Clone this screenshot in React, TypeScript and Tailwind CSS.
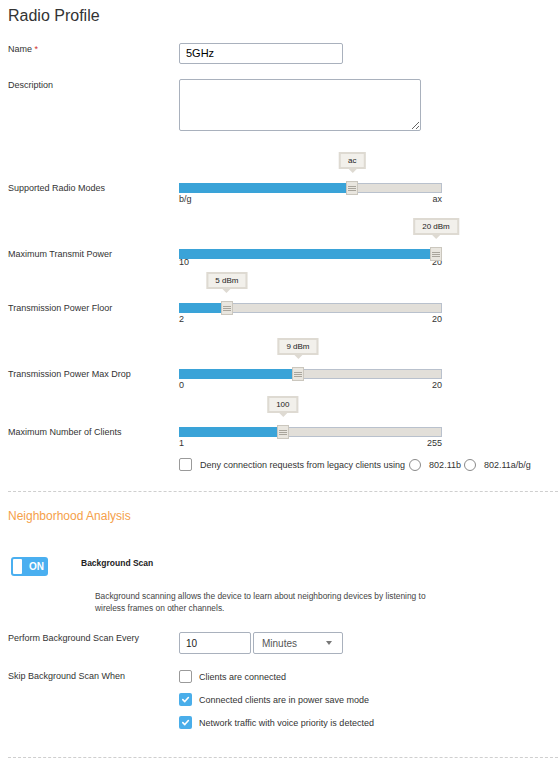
import React from "react";

const FONT = "font-['Liberation_Sans',Arial,sans-serif]";

function Slider({
  label,
  min,
  max,
  pct,
  tip,
  mt,
  labelsMt = "mt-[1px]",
}: {
  label: string;
  min: string;
  max: string;
  pct: number;
  tip: string;
  mt: string;
  labelsMt?: string;
}) {
  const left = pct * (263 - 12);
  return (
    <div className={`flex pl-[8px] ${mt}`}>
      <div className="w-[171px] h-[10px] flex items-center text-[9px] leading-[12px] whitespace-nowrap text-[#333]">
        {label}
      </div>
      <div className="w-[263px]">
        <div className="relative h-[10px] bg-[#e2dfd9] border border-[#b9c1cd]">
          <div
            className="absolute left-[-1px] top-[-1px] bottom-[-1px] bg-[#3aa3d8]"
            style={{ width: left + 6 }}
          />
          <div
            className="absolute top-[-3px] w-[12px] h-[14px] bg-[#e9e6df] border border-[#cbc7be] flex flex-col items-center justify-center gap-[1px]"
            style={{ left: left - 1 }}
          >
            <div className="w-[8px] h-[1px] bg-[#a9a59c]" />
            <div className="w-[8px] h-[1px] bg-[#a9a59c]" />
            <div className="w-[8px] h-[1px] bg-[#a9a59c]" />
          </div>
          <div
            className="absolute bottom-[19px] -translate-x-1/2 flex flex-col items-center"
            style={{ left: left + 5 }}
          >
            <div className="h-[17px] px-[7px] flex items-center bg-[#f2f0eb] border-2 border-[#dedad2] text-[8px] leading-[9px] whitespace-nowrap text-[#222]">
              {tip}
            </div>
            <div className="w-0 h-0 border-l-[4px] border-r-[4px] border-t-[4px] border-l-transparent border-r-transparent border-t-[#dedad2]" />
          </div>
        </div>
        <div className={`flex justify-between text-[9px] leading-[10px] text-[#333] ${labelsMt}`}>
          <span>{min}</span>
          <span>{max}</span>
        </div>
      </div>
    </div>
  );
}

function Checkbox({ checked }: { checked?: boolean }) {
  if (checked) {
    return (
      <div className="w-[13px] h-[13px] rounded-[2px] bg-[#4aaeea] flex items-center justify-center shrink-0">
        <svg width="9" height="9" viewBox="0 0 10 10">
          <path d="M2 5.2 L4.2 7.3 L8.2 2.8" stroke="white" strokeWidth="1.8" fill="none" strokeLinecap="round" strokeLinejoin="round" />
        </svg>
      </div>
    );
  }
  return <div className="w-[13px] h-[13px] rounded-[2px] border border-[#9a9a9a] bg-white shrink-0" />;
}

function Radio() {
  return <div className="w-[12px] h-[12px] rounded-full border border-[#8a8a8a] bg-white shrink-0" />;
}

export default function App() {
  return (
    <div className={`w-[558px] h-[775px] bg-white ${FONT} text-[#333]`}>
      <h1 className="pl-[8px] pt-[6px] text-[16px] leading-[20px] text-[#333]">Radio Profile</h1>

      <div className="flex pl-[8px] mt-[17px]">
        <div className="w-[171px] text-[9px] leading-[12px]">
          Name <span className="text-[#d0312d]">*</span>
        </div>
        <div className="w-[164px] h-[21px] border border-[#a9b1bd] rounded-[2px] flex items-center pl-[6px] text-[11px] text-black">
          5GHz
        </div>
      </div>

      <div className="flex pl-[8px] mt-[15px]">
        <div className="w-[171px] text-[9px] leading-[12px]">Description</div>
        <textarea
          className="w-[242px] h-[52px] border border-[#a9b1bd] rounded-[2px] resize-y"
          readOnly
        />
      </div>

      <Slider label="Supported Radio Modes" min="b/g" max="ax" pct={2 / 3} tip="ac" mt="mt-[52px]" />
      <Slider label="Maximum Transmit Power" min="10" max="20" pct={1} tip="20 dBm" mt="mt-[45px]" labelsMt="mt-[-2px]" />
      <Slider label="Transmission Power Floor" min="2" max="20" pct={3 / 18} tip="5 dBm" mt="mt-[36px]" />
      <Slider label="Transmission Power Max Drop" min="0" max="20" pct={9 / 20} tip="9 dBm" mt="mt-[45px]" />
      <Slider label="Maximum Number of Clients" min="1" max="255" pct={99 / 254} tip="100" mt="mt-[37px]" />

      <div className="flex items-center pl-[179px] mt-[10px] h-[13px] text-[9px] leading-[12px] whitespace-nowrap">
        <Checkbox />
        <span className="ml-[8px]">Deny connection requests from legacy clients using</span>
        <div className="ml-[4px]">
          <Radio />
        </div>
        <span className="ml-[8px]">802.11b</span>
        <div className="ml-[3px]">
          <Radio />
        </div>
        <span className="ml-[8px]">802.11a/b/g</span>
      </div>

      <div className="ml-[8px] mt-[20px] border-t border-dashed border-[#cfcfcf]" />

      <h2 className="pl-[8px] mt-[17px] text-[12px] leading-[14px] text-[#f5a04a]">Neighborhood Analysis</h2>

      <div className="flex items-start mt-[34px]">
        <div className="ml-[11px] w-[37px] h-[19px] rounded-[3px] bg-[#4aaff0] flex items-center pl-[2px]">
          <div className="w-[9px] h-[15px] bg-white rounded-[1px]" />
          <span className="ml-[7px] text-white font-bold text-[10px] leading-[12px]">ON</span>
        </div>
        <div className="ml-[33px] text-[8.5px] leading-[12px] font-bold text-[#222]">Background Scan</div>
      </div>

      <p className="pl-[95px] mt-[14px] text-[8.4px] leading-[12px] text-[#444]">
        Background scanning allows the device to learn about neighboring devices by listening to
        <br />
        wireless frames on other channels.
      </p>

      <div className="flex pl-[8px] mt-[18px]">
        <div className="w-[171px] text-[9px] leading-[12px]">Perform Background Scan Every</div>
        <div className="w-[72px] h-[22px] border border-[#a9b1bd] rounded-[2px] flex items-center pl-[6px] text-[10px] text-[#222]">
          10
        </div>
        <div className="ml-[2px] w-[90px] h-[22px] border border-[#a9b1bd] rounded-[2px] flex items-center justify-between pl-[8px] pr-[10px] text-[10px] text-[#555]">
          <span>Minutes</span>
          <div className="w-0 h-0 border-l-[3px] border-r-[3px] border-t-[4px] border-l-transparent border-r-transparent border-t-[#777]" />
        </div>
      </div>

      <div className="flex pl-[8px] mt-[16px]">
        <div className="w-[171px] text-[9px] leading-[12px]">Skip Background Scan When</div>
        <div className="flex flex-col gap-[10px] text-[9px] leading-[12px]">
          <div className="flex items-center h-[13px]">
            <Checkbox />
            <span className="ml-[7px]">Clients are connected</span>
          </div>
          <div className="flex items-center h-[13px]">
            <Checkbox checked />
            <span className="ml-[7px]">Connected clients are in power save mode</span>
          </div>
          <div className="flex items-center h-[13px]">
            <Checkbox checked />
            <span className="ml-[7px]">Network traffic with voice priority is detected</span>
          </div>
        </div>
      </div>

      <div className="ml-[8px] mt-[28px] border-t border-dashed border-[#cfcfcf]" />
    </div>
  );
}
